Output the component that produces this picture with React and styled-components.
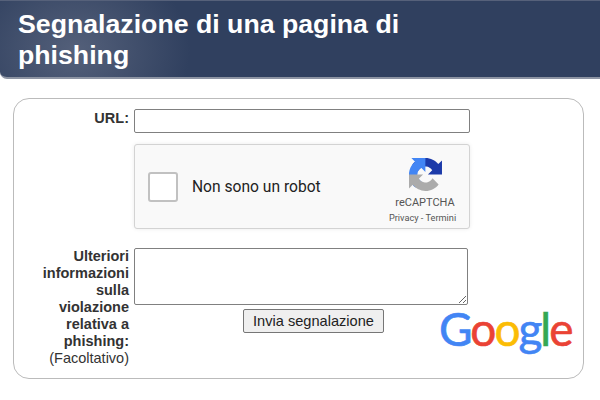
import styled, { createGlobalStyle } from "styled-components";

const GlobalStyle = createGlobalStyle`
  html, body {
    margin: 0;
    background: #fff;
    overflow: hidden;
  }
  body {
    font-family: "Liberation Sans", Arial, sans-serif;
    color: #333;
  }
`;

const Header = styled.header`
  box-sizing: border-box;
  height: 79px;
  padding: 8px 18px 0;
  border-radius: 0 0 0 7px;
  border-top: 1px solid #56617a;
  border-bottom: 2px solid #8d94a3;
  background:
    radial-gradient(ellipse 115px 95px at 75px 50px, #54607a 0%, rgba(84, 96, 122, 0) 100%),
    #30405f;
`;

const Title = styled.h1`
  margin: 0;
  max-width: 440px;
  font-size: 26.7px;
  line-height: 31px;
  font-weight: 700;
  color: #fff;
`;

const Card = styled.form`
  box-sizing: border-box;
  width: 571px;
  height: 281px;
  margin: 19px 0 0 13px;
  padding: 10px 0 0 0;
  border: 1px solid #bbb;
  border-radius: 16px;
  display: grid;
  grid-template-columns: 115px 1fr;
  column-gap: 5px;
  align-content: start;
`;

const Label = styled.label`
  text-align: right;
  font-size: 14.5px;
  line-height: 17px;
  font-weight: 700;
  color: #333;
  padding-left: 20px;
  padding-top: ${(p) => p.$top}px;
`;

const Optional = styled.span`
  display: block;
  font-weight: 400;
`;

const UrlInput = styled.input`
  box-sizing: border-box;
  display: block;
  width: 336px;
  height: 24px;
  border: 1px solid #808080;
  border-radius: 2px;
  background: #fff;
  padding: 1px 2px;
`;

const Captcha = styled.div`
  grid-column: 2;
  box-sizing: border-box;
  width: 336px;
  height: 85px;
  margin: 11px 0 19px;
  border: 1px solid #d3d3d3;
  border-radius: 3px;
  background: #f9f9f9;
  box-shadow: 0 0 4px rgba(0, 0, 0, 0.08);
  display: flex;
  align-items: center;
  padding-left: 13px;
  font-family: Roboto, "Liberation Sans", sans-serif;
`;

const CheckBox = styled.div`
  box-sizing: border-box;
  width: 30px;
  height: 30px;
  border: 2px solid #c1c1c1;
  border-radius: 3px;
  background: #fff;
`;

const CaptchaText = styled.span`
  margin-left: 14px;
  font-size: 15.6px;
  color: #222;
  flex: 1;
`;

const Brand = styled.div`
  width: 80px;
  margin-right: 4px;
  padding-top: 7px;
  display: flex;
  flex-direction: column;
  align-items: center;
  color: #555;
`;

const BrandName = styled.span`
  margin-top: 5px;
  font-size: 11px;
  line-height: 13px;
`;

const BrandLinks = styled.span`
  margin: 3px 5px 0 0;
  font-size: 9.2px;
  line-height: 11px;
`;

const Field = styled.div`
  width: 360px;
`;

const Notes = styled.textarea`
  box-sizing: border-box;
  display: block;
  width: 334px;
  height: 57px;
  border: 1px solid #808080;
  border-radius: 2px;
  background: #fff;
  padding: 2px;
`;

const Actions = styled.div`
  display: flex;
  align-items: flex-start;
  margin-top: 4px;
`;

const Submit = styled.button`
  box-sizing: border-box;
  width: 141px;
  height: 24px;
  margin-left: 109px;
  flex: none;
  border: 1px solid #767676;
  border-radius: 2px;
  background: #efefef;
  color: #222;
  font-family: "Liberation Sans", Arial, sans-serif;
  font-size: 14.6px;
  padding: 0;
`;

const Logo = styled.div`
  flex: none;
  margin: -10px 0 0 55px;
  font-family: Lato, "Open Sans", sans-serif;
  font-size: 46px;
  line-height: 60px;
  letter-spacing: -2px;
  font-weight: 400;
  -webkit-text-stroke: 0.6px currentColor;
`;

const Letter = styled.span`
  color: ${(p) => p.$color};
`;

function CaptchaIcon() {
  return (
    <svg width="33" height="33" viewBox="0 0 64 64" aria-hidden="true">
      <path
        fill="#1c3aa9"
        d="M64 31.955l-.033-1.37V4.687l-7.16 7.16C50.948 4.674 42.033.093 32.05.093c-10.4 0-19.622 4.96-25.458 12.64l11.736 11.86a15.55 15.55 0 0 1 4.754-5.334c2.05-1.6 4.952-2.906 8.968-2.906.485 0 .86.057 1.135.163 4.976.393 9.288 3.14 11.828 7.124l-8.307 8.307c10.522-.04 22.4-.066 27.295.005"
      />
      <path
        fill="#4285f4"
        d="M31.862.001l-1.37.033H4.594l7.16 7.16C4.58 13.053 0 21.968 0 31.951c0 10.4 4.96 19.622 12.64 25.458l11.86-11.736a15.55 15.55 0 0 1-5.334-4.754c-1.6-2.05-2.906-4.952-2.906-8.968 0-.485.057-.86.163-1.135.393-4.976 3.14-9.288 7.124-11.828l8.307 8.307c-.04-10.522-.066-22.4.005-27.295"
      />
      <path
        fill="#ababab"
        d="M.001 31.957l.033 1.37v25.898l7.16-7.16c5.86 7.173 14.774 11.754 24.758 11.754 10.4 0 19.622-4.96 25.458-12.64l-11.736-11.86a15.55 15.55 0 0 1-4.754 5.334c-2.05 1.6-4.952 2.906-8.968 2.906-.485 0-.86-.057-1.135-.163-4.976-.393-9.288-3.14-11.828-7.124l8.307-8.307c-10.522.04-22.4.066-27.295-.005"
      />
    </svg>
  );
}

export default function App() {
  return (
    <>
      <GlobalStyle />
      <Header>
        <Title>Segnalazione di una pagina di phishing</Title>
      </Header>
      <Card>
        <Label $top={1}>URL:</Label>
        <UrlInput />
        <Captcha>
          <CheckBox />
          <CaptchaText>Non sono un robot</CaptchaText>
          <Brand>
            <CaptchaIcon />
            <BrandName>reCAPTCHA</BrandName>
            <BrandLinks>Privacy - Termini</BrandLinks>
          </Brand>
        </Captcha>
        <Label $top={0}>
          Ulteriori informazioni sulla violazione relativa a phishing:
          <Optional>(Facoltativo)</Optional>
        </Label>
        <Field>
          <Notes />
          <Actions>
            <Submit type="button">Invia segnalazione</Submit>
            <Logo>
              <Letter $color="#4285f4">G</Letter>
              <Letter $color="#ea4335">o</Letter>
              <Letter $color="#fbbc05">o</Letter>
              <Letter $color="#4285f4">g</Letter>
              <Letter $color="#34a853">l</Letter>
              <Letter $color="#ea4335">e</Letter>
            </Logo>
          </Actions>
        </Field>
      </Card>
    </>
  );
}
